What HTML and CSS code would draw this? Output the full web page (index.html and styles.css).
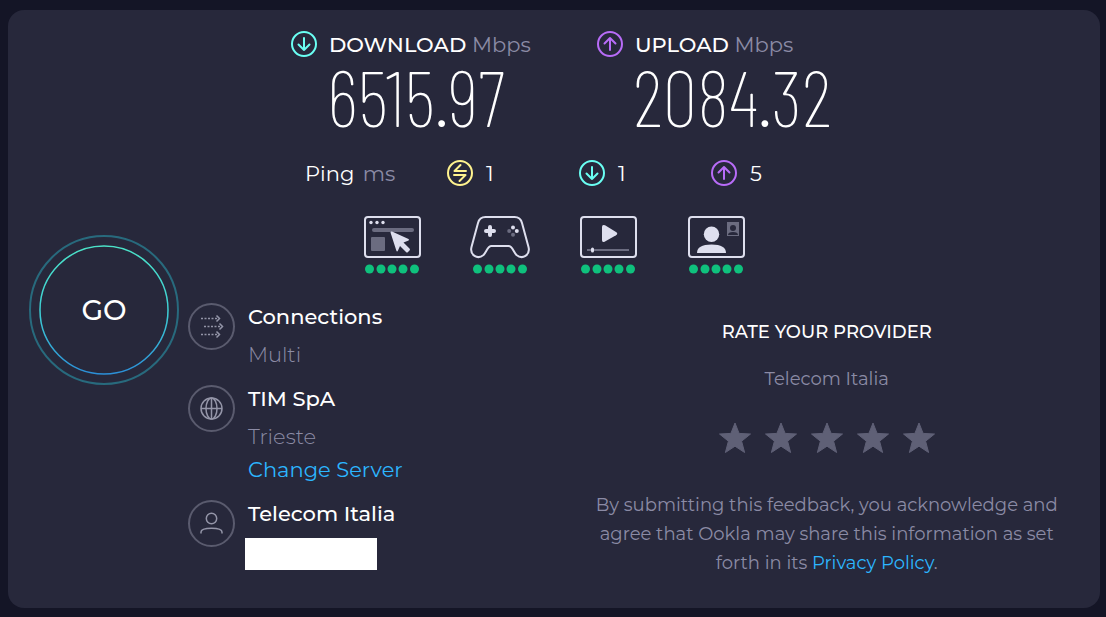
FILE: index.html
```
<!DOCTYPE html>
<html lang="en">
<head>
    <meta charset="UTF-8">
    <meta name="viewport" content="width=device-width, initial-scale=1.0">
    <title>Speedtest Result</title>
    <link rel="stylesheet" href="styles.css">
</head>
<body>
    <!-- Shared icons -->
    <svg class="sprite" aria-hidden="true">
        <symbol id="icon-down" viewBox="0 0 26 26">
            <circle cx="13" cy="13" r="12"/>
            <path d="M13 7v12M7.500 13.500L13 19l5.500-5.500"/>
        </symbol>
        <symbol id="icon-up" viewBox="0 0 26 26">
            <circle cx="13" cy="13" r="12"/>
            <path d="M13 19V7M7.500 12.500L13 7l5.500 5.500"/>
        </symbol>
        <symbol id="icon-idle" viewBox="0 0 26 26">
            <circle cx="13" cy="13" r="12"/>
            <path d="M13.500 5L7.500 11H19M7 15h11.500L12.500 21"/>
        </symbol>
        <symbol id="icon-star" viewBox="0 0 34 34">
            <path d="M17 2l4.100 10.400 11.400.600-8.900 7.200 3 11.300L17 25.200l-9.600 6.300 3-11.300L1.500 13l11.400-.600z"/>
        </symbol>
    </svg>

    <main class="panel">
        <button class="go-btn" type="button">
            <svg class="go-ring" viewBox="0 0 150 150" aria-hidden="true">
                <defs>
                    <linearGradient id="ring" x1="0" y1="0" x2="0" y2="1">
                        <stop offset="0" stop-color="#4be3c8"/>
                        <stop offset="0.500" stop-color="#3fd0d4"/>
                        <stop offset="1" stop-color="#2b8fd8"/>
                    </linearGradient>
                </defs>
                <circle cx="75" cy="75" r="74" stroke="#286a7d" stroke-width="2"/>
                <circle cx="75" cy="75" r="64" stroke="url(#ring)" stroke-width="1.500"/>
            </svg>
            <span>GO</span>
        </button>

        <section class="results">
            <div class="speeds">
                <div class="speed">
                    <h2 class="speed-title">
                        <svg class="icon download"><use href="#icon-down"/></svg>
                        <span>DOWNLOAD <small>Mbps</small></span>
                    </h2>
                    <p class="speed-value">6515.97</p>
                </div>
                <div class="speed">
                    <h2 class="speed-title">
                        <svg class="icon upload"><use href="#icon-up"/></svg>
                        <span>UPLOAD <small>Mbps</small></span>
                    </h2>
                    <p class="speed-value">2084.32</p>
                </div>
            </div>

            <div class="pings">
                <span class="ping-label">Ping <small>ms</small></span>
                <span class="ping"><svg class="icon idle"><use href="#icon-idle"/></svg>1</span>
                <span class="ping"><svg class="icon download"><use href="#icon-down"/></svg>1</span>
                <span class="ping"><svg class="icon upload"><use href="#icon-up"/></svg>5</span>
            </div>

            <div class="scores">
                <div class="score">
                    <svg class="score-icon" viewBox="0 0 60 44">
                        <rect class="line" x="3" y="2" width="55" height="40" rx="3"/>
                        <g class="fill"><circle cx="9" cy="7.500" r="1.700"/><circle cx="15" cy="7.500" r="1.700"/><circle cx="21" cy="7.500" r="1.700"/></g>
                        <path class="dim-line" d="M12 15h38"/>
                        <rect class="dim" x="9" y="22" width="14" height="14" rx="1"/>
                        <path class="fill" d="M28.500 17.500q0-1.500 1.500-1l16.500 7.500q1.500 1-.500 1.700l-4.500 1.800 6 6q1 1 0 2l-1.500 1.500q-1 1-2 0l-6-6-2 4.500q-1 1.800-1.700 0z"/>
                    </svg>
                    <svg class="dots" viewBox="0 0 60 10"><use href="#five-dots"/></svg>
                </div>
                <div class="score">
                    <svg class="score-icon" viewBox="0 0 60 44">
                        <path class="line" d="M15.500 2h29q6 0 7.500 6l6.500 24c2 8-6 13-12 8-3-3-4-9-8-9h-17c-4 0-5 6-8 9-6 5-14 0-12-8L8 8q1.500-6 7.500-6z"/>
                        <path class="pad" d="M20 12v8M16 16h8"/>
                        <g class="fill"><circle cx="43" cy="12.500" r="2"/><circle cx="46.800" cy="16" r="2"/></g>
                        <g class="dim"><circle cx="39.200" cy="16" r="2"/><circle cx="43" cy="19.700" r="2"/></g>
                    </svg>
                    <svg class="dots" viewBox="0 0 60 10"><use href="#five-dots"/></svg>
                </div>
                <div class="score">
                    <svg class="score-icon" viewBox="0 0 60 44">
                        <rect class="line" x="3" y="2" width="55" height="40" rx="3"/>
                        <path class="fill" d="M24 12q0-3 3-1.700l11 6.700q2.500 1.700 0 3.300l-11 6.200q-3 1.500-3-1.500z"/>
                        <path class="dim-thin" d="M9 35h42"/>
                        <rect class="fill" x="13" y="32.500" width="3" height="5" rx="1.500"/>
                    </svg>
                    <svg class="dots" viewBox="0 0 60 10"><use href="#five-dots"/></svg>
                </div>
                <div class="score">
                    <svg class="score-icon" viewBox="0 0 60 44">
                        <rect class="line" x="3" y="2" width="55" height="40" rx="3"/>
                        <circle class="fill" cx="25.500" cy="19.300" r="7.700"/>
                        <path class="fill" d="M11 38q0-8.500 14.500-8.500T40 38z"/>
                        <rect class="dim" x="41" y="7" width="12" height="14"/>
                        <circle class="cut" cx="47" cy="13" r="3"/>
                        <path class="cut" d="M42 20q0-3 5-3t5 3z"/>
                    </svg>
                    <svg class="dots" viewBox="0 0 60 10">
                        <g id="five-dots"><circle cx="7.500" cy="5" r="4.500"/><circle cx="19" cy="5" r="4.500"/><circle cx="30" cy="5" r="4.500"/><circle cx="41" cy="5" r="4.500"/><circle cx="52.500" cy="5" r="4.500"/></g>
                    </svg>
                </div>
            </div>
        </section>

        <section class="details">
            <div class="detail">
                <svg class="detail-icon" viewBox="0 0 47 47">
                    <circle class="ring" cx="23.500" cy="23.500" r="22.500"/>
                    <path class="dashes" d="M13 15.500h17M16 23.500h17M13 31.500h17"/>
                    <path d="M28.500 12.500l3 3-3 3M31.500 20.500l3 3-3 3M28.500 28.500l3 3-3 3"/>
                </svg>
                <div>
                    <h3>Connections</h3>
                    <p>Multi</p>
                </div>
            </div>
            <div class="detail">
                <svg class="detail-icon" viewBox="0 0 47 47">
                    <circle class="ring" cx="23.500" cy="23.500" r="22.500"/>
                    <circle cx="23.500" cy="23.500" r="10.500"/>
                    <ellipse cx="23.500" cy="23.500" rx="5.500" ry="10.500"/>
                    <path d="M13 23.500h21M23.500 13v21"/>
                </svg>
                <div>
                    <h3>TIM SpA</h3>
                    <p>Trieste</p>
                    <a href="#">Change Server</a>
                </div>
            </div>
            <div class="detail">
                <svg class="detail-icon" viewBox="0 0 47 47">
                    <circle class="ring" cx="23.500" cy="23.500" r="22.500"/>
                    <circle cx="23.500" cy="18.500" r="5.200"/>
                    <path d="M13 33.500v-1.500c0-5 21-5 21 0v1.500"/>
                </svg>
                <div>
                    <h3>Telecom Italia</h3>
                    <div class="ip-mask"></div>
                </div>
            </div>
        </section>

        <section class="rating">
            <h3>RATE YOUR PROVIDER</h3>
            <p class="provider">Telecom Italia</p>
            <div class="stars">
                <button type="button" aria-label="1 star"><svg><use href="#icon-star"/></svg></button>
                <button type="button" aria-label="2 stars"><svg><use href="#icon-star"/></svg></button>
                <button type="button" aria-label="3 stars"><svg><use href="#icon-star"/></svg></button>
                <button type="button" aria-label="4 stars"><svg><use href="#icon-star"/></svg></button>
                <button type="button" aria-label="5 stars"><svg><use href="#icon-star"/></svg></button>
            </div>
            <p class="notice">By submitting this feedback, you acknowledge and agree that Ookla may share this information as set forth in its <a href="#">Privacy Policy</a>.</p>
        </section>
    </main>
</body>
</html>
```
FILE: styles.css
```
:root {
    --page-background: #141526;
    --panel-background: #27283b;
    --text-color: #ffffff;
    --muted-color: #8b8ba5;
    --link-color: #2cb6ff;
    --download-color: #6afff3;
    --upload-color: #b86cf8;
    --idle-color: #fff38e;
    --score-color: #0fc17d;
    --icon-color: #dedfee;
    --dim-color: #6b6c80;
}

* {
    margin: 0;
    padding: 0;
    box-sizing: border-box;
}

body {
    font-family: Montserrat, Inter, sans-serif;
    font-size: 21px;
    background-color: var(--page-background);
    color: var(--text-color);
    padding: 10px 6px 9px 8px;
}

a {
    color: var(--link-color);
    text-decoration: none;
}

small {
    font-size: inherit;
    font-weight: 400;
    color: var(--muted-color);
}

svg {
    display: block;
    fill: none;
    flex-shrink: 0;
}

.sprite {
    position: absolute;
    width: 0;
    height: 0;
}

.panel {
    display: grid;
    grid-template-columns: 150px 7fr 10fr;
    column-gap: 9px;
    padding: 18px 8px 30px 21px;
    background-color: var(--panel-background);
    border-radius: 16px;
}

.go-btn {
    grid-column: 1;
    grid-row: 1 / 3;
    align-self: center;
    display: grid;
    place-items: center;
    height: 150px;
    margin-top: 14px;
    border: none;
    border-radius: 50%;
    background: none;
    color: inherit;
    font-family: inherit;
    font-size: 28px;
    font-weight: 500;
    cursor: pointer;
}

.go-btn > * {
    grid-area: 1 / 1;
}

.go-ring {
    width: 150px;
    height: 150px;
}

/* Spans the full panel so it stays centred, the GO button keeps its clicks */
.results {
    grid-column: 1 / 4;
    grid-row: 1;
    padding-right: 13px;
    pointer-events: none;
}

.speeds {
    display: grid;
    grid-template-columns: 306px 306px;
    justify-content: center;
}

.speed {
    padding-left: 43px;
}

.speed-title {
    display: flex;
    align-items: center;
    gap: 12px;
    height: 32px;
    font-size: 21px;
    font-weight: 500;
}

.speed-value {
    padding-left: 36px;
    font-family: "Barlow Condensed", "Roboto Condensed", sans-serif;
    font-size: 78px;
    font-weight: 200;
    line-height: 72px;
}

.icon {
    width: 26px;
    height: 26px;
    stroke-width: 2;
    stroke-linecap: round;
    stroke-linejoin: round;
}

.download {
    stroke: var(--download-color);
}

.upload {
    stroke: var(--upload-color);
}

.idle {
    stroke: var(--idle-color);
}

.pings {
    display: grid;
    grid-template-columns: 142px 132px 132px 92px;
    justify-content: center;
    align-items: center;
    height: 32px;
    margin-top: 25px;
}

.ping-label small {
    margin-left: 3px;
}

.ping {
    display: flex;
    align-items: center;
    gap: 13px;
}

.scores {
    display: flex;
    justify-content: center;
    gap: 48px;
    margin: 26px 0 29px;
}

.score-icon {
    width: 60px;
    height: 44px;
}

.dots {
    width: 60px;
    height: 10px;
    margin-top: 5px;
    fill: var(--score-color);
}

.line {
    stroke: var(--icon-color);
    stroke-width: 2;
}

.fill {
    fill: var(--icon-color);
}

.pad {
    stroke: var(--icon-color);
    stroke-width: 4;
    stroke-linecap: round;
}

.dim {
    fill: var(--dim-color);
}

.dim-line {
    stroke: var(--dim-color);
    stroke-width: 4;
    stroke-linecap: round;
}

.dim-thin {
    stroke: var(--dim-color);
    stroke-width: 2;
}

.cut {
    fill: var(--panel-background);
}

.details {
    grid-column: 2;
    display: flex;
    flex-direction: column;
    gap: 14px;
}

.detail {
    display: flex;
    gap: 10px;
}

.detail h3 {
    padding-left: 3px;
    margin-bottom: 7px;
    font-size: 21px;
    font-weight: 500;
    line-height: 28px;
}

.detail p,
.detail a {
    display: block;
    padding-left: 3px;
    line-height: 33px;
}

.detail p {
    color: var(--muted-color);
    font-weight: 300;
}

.detail-icon {
    width: 47px;
    height: 47px;
    stroke: #9495a8;
    stroke-width: 1.5;
}

.detail-icon .ring {
    stroke: #5a5b6e;
    stroke-width: 2;
}

.dashes {
    stroke-dasharray: 2 1.5;
}

.ip-mask {
    width: 132px;
    height: 32px;
    margin-top: 10px;
    background-color: #ffffff;
}

.rating {
    grid-column: 3;
    display: flex;
    flex-direction: column;
    align-items: center;
    padding: 15px 4px 0 0;
    font-size: 18px;
    text-align: center;
}

.rating h3 {
    font-size: 18px;
    font-weight: 500;
    line-height: 28px;
}

.provider {
    margin-top: 19px;
    color: var(--muted-color);
    line-height: 28px;
}

.stars {
    display: flex;
    gap: 12px;
    margin-top: 28px;
}

.stars button {
    border: none;
    background: none;
    cursor: pointer;
}

.stars svg {
    width: 34px;
    height: 34px;
    fill: #5f6076;
    stroke: #5f6076;
    stroke-width: 1;
    stroke-linejoin: round;
}

.notice {
    max-width: 480px;
    margin-top: 36px;
    color: var(--muted-color);
    line-height: 29px;
}
```
